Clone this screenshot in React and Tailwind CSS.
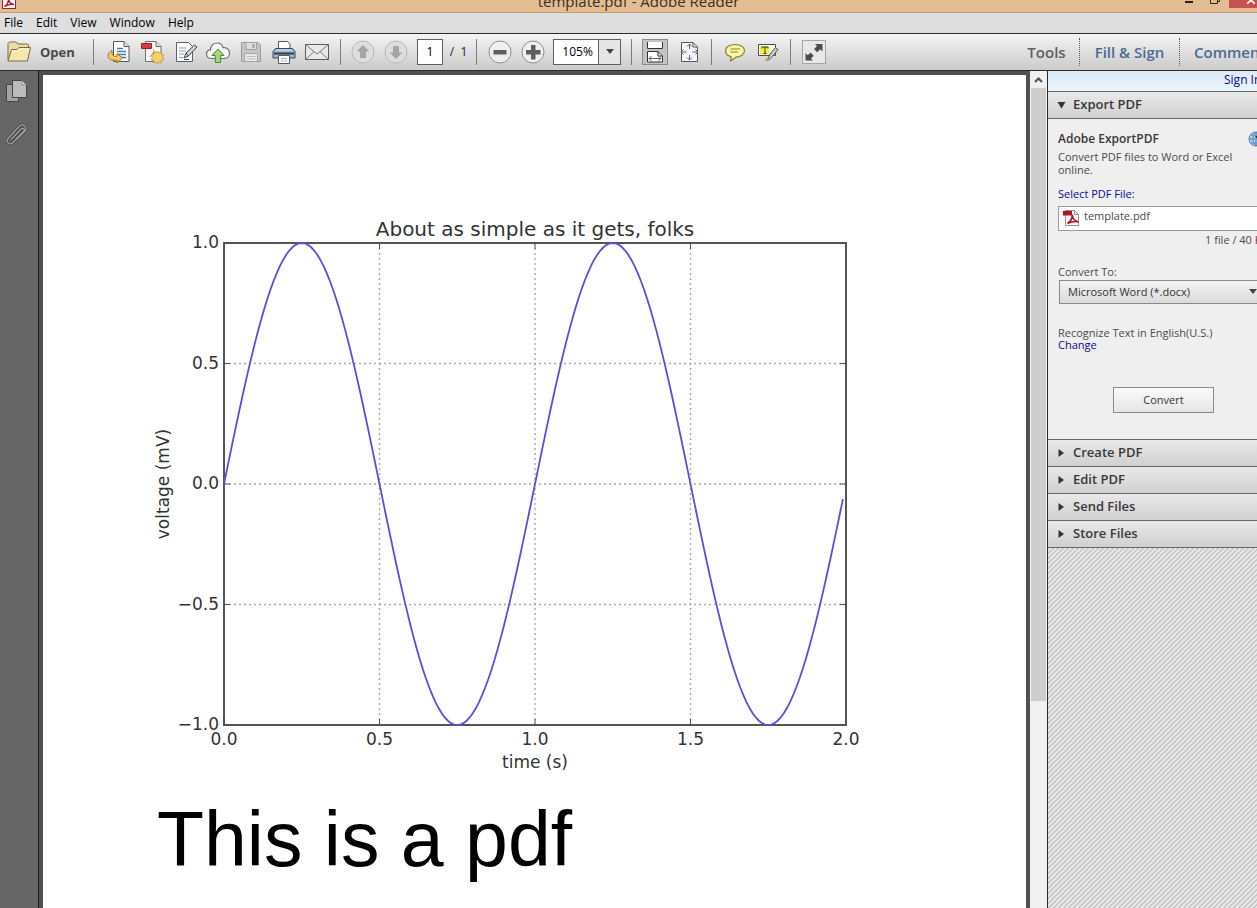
import React, { useState } from "react";

const menuItems = ["File", "Edit", "View", "Window", "Help"];
const closedSections = ["Create PDF", "Edit PDF", "Send Files", "Store Files"];

function Icon({ size = 26, children }) {
  return (
    <svg width={size} height={size} viewBox={`0 0 ${size} ${size}`} fill="none" strokeLinejoin="round" aria-hidden="true">
      {children}
    </svg>
  );
}

function ToolButton({ label, children }) {
  return (
    <button type="button" aria-label={label} className="flex h-[33px] w-[33px] shrink-0 items-center justify-center">
      {children}
    </button>
  );
}

function Separator({ className = "" }) {
  return <div className={`h-[26px] w-px shrink-0 bg-[#7c7c7c] ${className}`} />;
}

function FolderIcon() {
  return (
    <Icon>
      <path d="M2 21V4.500L3.500 3H10l2 2h9.500l1 1v4" fill="#e9dca6" stroke="#7a6a3a" />
      <path d="M2 22L5.500 10.500H11l2-2h11.500L21.500 22z" fill="#f4e6b0" stroke="#7a6a3a" />
      <path d="M6.500 12H12l2-2h9" stroke="#fdf7da" />
    </Icon>
  );
}

function ConvertPageIcon() {
  return (
    <Icon>
      <path d="M7.500 2.500H18l5 5v15H7.500z" fill="#fff" stroke="#55595f" />
      <path d="M18 2.500v5h5" fill="#dfe3e8" stroke="#55595f" />
      <path d="M11 9.500h6M11 12.500h9M11 15.500h9M14 18.500h6" stroke="#3f7bbd" strokeWidth="1.500" />
      <path d="M6 11.500C1.500 13 .8 19 4.500 20.500c2 1 4.500.8 6.500.5v3l5.500-5-5.500-4.500v2.700c-3 .6-5.500-.2-5-5.700z" fill="#f7cb66" stroke="#a87416" />
    </Icon>
  );
}

function CreatePdfIcon() {
  return (
    <Icon>
      <path d="M6.500 2.500H17l5 5v15H6.500z" fill="#f7f7f7" stroke="#6a6d72" />
      <path d="M17 2.500v5h5" fill="#e2e2e2" stroke="#6a6d72" />
      <path d="M10 18c4-2 5-6 4.500-8 0 3 2 5 5 5" stroke="#d9a3a3" />
      <rect x="2.500" y="4.500" width="10" height="5" fill="#d8383f" stroke="#a51d26" />
      <path d="M18.500 12l1.500 2 2.300-1 .2 2.500 2.300.7-1.300 2.300 1.300 2.200-2.400.7-.2 2.400-2.300-.8-1.500 1.800-1.500-1.800-2.300.8-.2-2.400-2.300-.7 1.300-2.200-1.300-2.300 2.300-.7.2-2.500 2.300 1z" fill="#f8d070" stroke="#b98a30" strokeWidth=".8" />
    </Icon>
  );
}

function SignIcon() {
  return (
    <Icon>
      <path d="M4.500 3.500h12l4 4v15h-16z" fill="#fafafa" stroke="#5c6066" />
      <path d="M7 9h7M7 12h7M7 15h5M7 18.500h4" stroke="#9a9a9a" />
      <path d="M12 19l2-5 8.500-8 2.500 2-8.500 9z" fill="#c9d3dc" stroke="#39434d" />
      <path d="M14 14l2.500 3M12 20.500h5" stroke="#39434d" />
    </Icon>
  );
}

function CloudIcon() {
  return (
    <Icon>
      <path d="M6.500 19.500C3 19.500 1.500 17 1.500 15s1.500-4 4-4.200C5.500 6 9 4 12 4c3.200 0 5.500 2 6 4.700 4.500-.4 6.500 2.300 6.500 5.300s-2 5.500-5 5.500z" fill="#f6f6f6" stroke="#6a6f74" strokeWidth="1.200" />
      <path d="M13 10l6 6.500h-3.300v7h-5.400v-7H7z" fill="#a3d873" stroke="#4d8a2e" />
    </Icon>
  );
}

function SaveIcon() {
  return (
    <Icon>
      <path d="M3.500 3.500h16.500l2.500 2.500v16.500h-19z" fill="#c6c6c6" stroke="#9b9b9b" />
      <path d="M8 3.500h10.500v7H8z" fill="#dedede" stroke="#a3a3a3" />
      <path d="M14.500 5h2v4h-2z" fill="#9c9c9c" />
      <path d="M6.500 14.500h13v8h-13z" fill="#eaeaea" stroke="#a3a3a3" />
      <path d="M8.500 17.500h9M8.500 20h9" stroke="#bdbdbd" />
    </Icon>
  );
}

function PrintIcon() {
  return (
    <Icon>
      <path d="M7.500 10V2.500h9L19 5v5z" fill="#fff" stroke="#4d5966" />
      <path d="M4.500 9.500h17l2.500 3v6.500h-22v-6.500z" fill="#9fb6cb" stroke="#34495e" />
      <path d="M3 14.500h20" stroke="#2d3e50" strokeWidth="2" />
      <path d="M5 11h16" stroke="#dbe6f0" />
      <path d="M7.500 16.500h11v8h-11z" fill="#fff" stroke="#4d5966" />
      <path d="M10 19.500h6M10 22h6" stroke="#b5b5b5" />
    </Icon>
  );
}

function MailIcon() {
  return (
    <Icon>
      <rect x="1.500" y="5.500" width="23" height="15" fill="#e9e9e9" stroke="#5d5d5d" />
      <path d="M2 6l11 9L24 6M2 20l8-7.500M24 20l-8-7.500" stroke="#7a7a7a" />
    </Icon>
  );
}

function RoundIcon({ faded, children }) {
  return (
    <Icon>
      <circle cx="13" cy="13" r="11" fill={faded ? "#dedede" : "#efefef"} stroke={faded ? "#b9b9b9" : "#909090"} />
      <g fill={faded ? "#a5a5a5" : "#5f5f5f"}>{children}</g>
    </Icon>
  );
}

function ScrollModeIcon() {
  return (
    <Icon size={24}>
      <path d="M4.500 2v6.500h15V2" fill="#fff" stroke="#333" />
      <path d="M4.500 22V11.500H15l4.500 4.500v6z" fill="#fff" stroke="#333" />
      <path d="M15 11.500v4.500h4.500" stroke="#333" />
      <path d="M6 18.500h12M8.500 16L6 18.500 8.500 21M15.500 16l2.500 2.500-2.500 2.500" stroke="#5a5a8c" />
    </Icon>
  );
}

function FitPageIcon() {
  return (
    <Icon>
      <path d="M5.500 3.500h11.500l4.500 4.500v14.500h-16z" fill="#f6f6f6" stroke="#555" />
      <path d="M17 3.500v4.500h4.500" stroke="#555" />
      <path d="M13.500 5v5M13.500 16v5M5 13h5.500M16.500 13H22M11 7.500l2.500-2.500 2.500 2.500M11 18.500l2.500 2.500 2.500-2.500M7.500 10.500L5 13l2.500 2.500M19.500 10.500L22 13l-2.500 2.500" stroke="#5f5f93" />
    </Icon>
  );
}

function CommentIcon() {
  return (
    <Icon>
      <path d="M13 5.500c5.500 0 9.500 2.700 9.500 6.300s-4 6.400-8.500 6.400L8.500 22l.8-4.200C6 17 3.500 14.800 3.500 11.800c0-3.600 4-6.300 9.500-6.300z" fill="#fbf6a0" stroke="#85803a" strokeWidth="1.200" />
      <path d="M8.500 10h9.500M8.500 13h7.500" stroke="#85803a" />
    </Icon>
  );
}

function HighlightIcon() {
  return (
    <Icon>
      <rect x="3.500" y="5.500" width="17" height="11" fill="#fff" stroke="#4a4a4a" />
      <path d="M5 7h9.500v8.500H5z" fill="#f7f03a" />
      <path d="M7 9.500V8h6v1.500M10 8v6.500M8.500 14.500h3" stroke="#333" />
      <path d="M13 20l2-5 5.500-6.500 2.500 2-5.500 7-3 3z" fill="#c9c9c9" stroke="#555" />
      <path d="M11 21.500l3.500-.7-2-2z" fill="#e8e23a" stroke="#777" strokeWidth=".8" />
    </Icon>
  );
}

function AcrobatIcon() {
  return (
    <svg width="18" height="18" viewBox="0 0 18 18" fill="none" aria-hidden="true">
      <path d="M3.500 1.500h9l4 4v11h-13z" fill="#fff" stroke="#9c8c8c" />
      <path d="M12.500 1.500v4h4" stroke="#9c8c8c" />
      <path d="M1 2h9v4.500H1z" fill="#b3121d" />
      <path d="M5.500 14.500c3-2 5-5.500 4.700-9 .3 4.500 2.300 6.500 6.300 7.500-4-1-8 0-11 1.500z" stroke="#b3121d" strokeWidth="1.600" />
    </svg>
  );
}

function TitleBar() {
  return (
    <header className="flex h-[13px] shrink-0 items-end justify-between overflow-hidden border-b border-[#bf9c79] bg-[#e3bc91]">
      <div className="flex w-24 shrink-0 pl-[2px]">
        <svg width="14" height="14" viewBox="0 0 14 14" fill="none" className="mb-[3px]" aria-hidden="true">
          <rect x=".5" y=".5" width="13" height="13" fill="#fff" stroke="#a51d26" />
          <path d="M2.500 11.500c2-1 4-4 4-8 .2 3.500 2 5.500 5.500 6-3.500-.5-6.500.3-9.500 2z" stroke="#b3121d" strokeWidth="1.400" />
        </svg>
      </div>
      <h1 className="pb-px text-[15px] leading-5 text-[#3c2f22]">template.pdf - Adobe Reader</h1>
      <div className="flex w-[76px] shrink-0 items-end self-stretch">
        <button type="button" aria-label="Minimize" className="mb-[9px] ml-1 h-[2px] w-2 bg-[#2e2418]" />
        <button type="button" aria-label="Restore" className="mb-2 ml-[17px] shrink-0">
          <svg width="10" height="12" viewBox="0 0 10 12" fill="none" stroke="#2e2418" aria-hidden="true">
            <path d="M.5 3.500h7v8h-7zM2.500 3V.5h7v9H8" />
          </svg>
        </button>
        <button type="button" aria-label="Close" className="mb-1 ml-auto flex h-5 w-7 items-end justify-center bg-[#c75050] pb-1 pl-4">
          <svg width="8" height="8" viewBox="0 0 8 8" stroke="#fff" strokeWidth="1.600" aria-hidden="true">
            <path d="M0 0l8 8M8 0L0 8" />
          </svg>
        </button>
      </div>
    </header>
  );
}

function MenuBar() {
  return (
    <nav className="flex h-5 shrink-0 items-center gap-[13px] bg-[#dedede] pl-1 text-xs leading-4 text-black">
      {menuItems.map((item) => (
        <button key={item} type="button">
          {item}
        </button>
      ))}
    </nav>
  );
}

function Toolbar() {
  const [page, setPage] = useState("1");

  return (
    <div className="flex h-[38px] shrink-0 items-center border-y border-[#2b2b2b] bg-linear-to-b from-[#f4f4f4] to-[#cbcbcb] pb-px">
      <button type="button" className="flex shrink-0 items-center gap-2 pl-[6px] text-[13px] leading-5 font-bold text-[#4a4a4a]">
        <FolderIcon />
        Open
      </button>
      <Separator className="mr-[9px] ml-[18px]" />
      <ToolButton label="Convert file"><ConvertPageIcon /></ToolButton>
      <ToolButton label="Create PDF"><CreatePdfIcon /></ToolButton>
      <ToolButton label="Sign"><SignIcon /></ToolButton>
      <ToolButton label="Upload"><CloudIcon /></ToolButton>
      <ToolButton label="Save"><SaveIcon /></ToolButton>
      <ToolButton label="Print"><PrintIcon /></ToolButton>
      <ToolButton label="Email"><MailIcon /></ToolButton>
      <Separator className="mx-[6px]" />
      <ToolButton label="Previous page">
        <RoundIcon faded><path d="M13 6l6.500 6.500H16V19h-6v-6.500H6.500z" /></RoundIcon>
      </ToolButton>
      <ToolButton label="Next page">
        <RoundIcon faded><path d="M13 20l6.500-6.500H16V7h-6v6.500H6.500z" /></RoundIcon>
      </ToolButton>
      <input
        aria-label="Page number"
        value={page}
        onChange={(e) => setPage(e.target.value)}
        className="ml-1 h-[26px] w-[26px] shrink-0 border border-[#5e5e5e] bg-white text-center text-xs text-black"
      />
      <span className="ml-[7px] shrink-0 text-xs whitespace-pre text-[#222]">/  1</span>
      <Separator className="mr-[6px] ml-[9px]" />
      <ToolButton label="Zoom out">
        <RoundIcon><path d="M6.500 11h13v4.500h-13z" /></RoundIcon>
      </ToolButton>
      <ToolButton label="Zoom in">
        <RoundIcon><path d="M11 6h4.500v5h5v4.500h-5v5H11v-5H6v-4.500h5z" /></RoundIcon>
      </ToolButton>
      <div className="relative ml-1 h-[26px] w-[68px] shrink-0 border border-[#5e5e5e] bg-white">
        <select aria-label="Zoom level" defaultValue="105%" className="block h-full w-full appearance-none pl-2 text-xs text-black">
          <option>75%</option>
          <option>100%</option>
          <option>105%</option>
        </select>
        <div className="pointer-events-none absolute inset-y-0 right-0 flex w-[22px] items-center justify-center border-l border-[#5e5e5e] bg-[#e6e6e6]">
          <svg width="8" height="5" viewBox="0 0 8 5" aria-hidden="true"><path d="M0 0h8L4 5z" fill="#444" /></svg>
        </div>
      </div>
      <Separator className="mx-[10px]" />
      <button type="button" aria-label="Scrolling mode" className="flex h-[26px] w-[26px] shrink-0 items-center justify-center border border-[#8a8a8a] bg-[#c4c4c4]">
        <ScrollModeIcon />
      </button>
      <div className="ml-1 flex">
        <ToolButton label="Fit page"><FitPageIcon /></ToolButton>
      </div>
      <Separator className="mx-[6px]" />
      <ToolButton label="Add note"><CommentIcon /></ToolButton>
      <ToolButton label="Highlight text"><HighlightIcon /></ToolButton>
      <Separator className="mr-[11px] ml-[6px]" />
      <button type="button" aria-label="Read mode" className="flex h-6 w-6 shrink-0 items-center justify-center border border-[#a6a6a6] bg-[#e9e9e9]">
        <svg width="22" height="22" viewBox="0 0 22 22" fill="#4c4c4c" aria-hidden="true">
          <path d="M12 3h7.500v7.500l-2.300-2.300-3 3-3.200-3.200 3-3z" />
          <path d="M10 19.500H2.500V12l2.300 2.300 2.700-2.800 3.200 3.200-2.700 2.800z" />
        </svg>
      </button>
      <nav className="ml-auto flex w-[239px] shrink-0 items-center overflow-hidden text-[15px] leading-7 font-semibold whitespace-nowrap text-[#4d6a92]">
        <button type="button" className="w-[61px] shrink-0 pr-1 text-[#606060]">Tools</button>
        <button type="button" className="w-[101px] shrink-0 border-x border-dotted border-[#555]">Fill &amp; Sign</button>
        <button type="button" className="shrink-0 pl-[14px]">Comment</button>
      </nav>
    </div>
  );
}

function SideRail() {
  return (
    <aside className="flex w-[39px] shrink-0 flex-col items-start gap-[18px] border-r border-[#1e1e1e] bg-[#666] pt-[7px] pl-1">
      <button type="button" aria-label="Page thumbnails">
        <svg width="26" height="26" viewBox="0 0 26 26" strokeLinejoin="round" aria-hidden="true">
          <path d="M2.500 6.500h12v17h-12z" fill="#a3a3a3" stroke="#454545" />
          <path d="M8.500 2.500h10l4 4v13h-14z" fill="#bcbcbc" stroke="#454545" />
          <path d="M18 2.500v4.500h4.500" fill="#d5d5d5" stroke="#8a8a8a" />
        </svg>
      </button>
      <button type="button" aria-label="Attachments">
        <svg width="26" height="26" viewBox="0 0 26 26" fill="none" strokeLinecap="round" aria-hidden="true">
          <path d="M7 17.500L17 7c2-2 4.500.5 2.500 2.500L9 20.500c-3.500 3.500-8-.5-4.500-4.500L15 4.500c4-4 9 1 5.500 5L13 17" stroke="#3f3f3f" strokeWidth="2.600" />
          <path d="M7 17.500L17 7c2-2 4.500.5 2.500 2.500L9 20.500c-3.500 3.500-8-.5-4.500-4.500L15 4.500c4-4 9 1 5.500 5L13 17" stroke="#a6a6a6" strokeWidth="1.200" />
        </svg>
      </button>
    </aside>
  );
}

// plot area inside the svg
const plot = { left: 81, top: 28, width: 622, height: 482 };
const xTicks = [0, 0.5, 1, 1.5, 2];
const yTicks = [1, 0.5, 0, -0.5, -1];
const toX = (t) => plot.left + (t / 2) * plot.width;
const toY = (v) => plot.top + ((1 - v) / 2) * plot.height;
const sinePoints = Array.from({ length: 200 }, (_, i) => {
  const t = i / 100;
  return `${toX(t).toFixed(2)},${toY(Math.sin(2 * Math.PI * t)).toFixed(2)}`;
}).join(" ");

function SineChart() {
  const right = plot.left + plot.width;
  const bottom = plot.top + plot.height;

  return (
    <svg
      width="730"
      height="570"
      viewBox="0 0 730 570"
      role="img"
      aria-label="Sine wave chart"
      className="block h-auto max-w-full font-['DejaVu_Sans',sans-serif] text-[17px]"
      fill="#333"
    >
      <text x="392" y="21" textAnchor="middle" className="text-[20px]">About as simple as it gets, folks</text>
      {xTicks.map((t) => (
        <g key={t}>
          {t > 0 && t < 2 && <path d={`M${toX(t)} ${plot.top}V${bottom}`} stroke="#a8a8a8" strokeWidth="1.400" strokeDasharray="2 3" />}
          <path d={`M${toX(t)} ${plot.top}v6M${toX(t)} ${bottom}v-6`} stroke="#555" />
          <text x={toX(t)} y="530" textAnchor="middle">{t.toFixed(1)}</text>
        </g>
      ))}
      {yTicks.map((v) => (
        <g key={v}>
          {Math.abs(v) < 1 && <path d={`M${plot.left} ${toY(v)}H${right}`} stroke="#a8a8a8" strokeWidth="1.400" strokeDasharray="2 3" />}
          <path d={`M${plot.left} ${toY(v)}h6M${right} ${toY(v)}h-6`} stroke="#555" />
          <text x="76" y={toY(v) + 5} textAnchor="end">{v.toFixed(1).replace("-", "−")}</text>
        </g>
      ))}
      <rect x={plot.left} y={plot.top} width={plot.width} height={plot.height} fill="none" stroke="#555" strokeWidth="2" />
      <polyline points={sinePoints} fill="none" stroke="#564fe2" strokeWidth="1.800" />
      <text x="392" y="553" textAnchor="middle">time (s)</text>
      <text transform="translate(26 269) rotate(-90)" textAnchor="middle">voltage (mV)</text>
    </svg>
  );
}

function DocumentView() {
  return (
    <main className="min-w-0 flex-1 overflow-hidden border-x-4 border-t-4 border-[#505050] bg-white">
      <div className="pt-[140px] pl-[100px]">
        <SineChart />
        <p className="mt-[10px] ml-[14px] font-['Liberation_Sans',Arial,sans-serif] text-[77px] leading-[88px] whitespace-nowrap text-black">
          This is a pdf
        </p>
      </div>
    </main>
  );
}

function ScrollBar() {
  return (
    <div className="flex w-[18px] shrink-0 flex-col border-r border-[#2b2b2b] bg-[#f0f0f0]">
      <button type="button" aria-label="Scroll up" className="flex h-[17px] shrink-0 items-center justify-center">
        <svg width="9" height="6" viewBox="0 0 9 6" fill="none" stroke="#505050" strokeWidth="2" aria-hidden="true">
          <path d="M1 5l3.500-3.500L8 5" />
        </svg>
      </button>
      <div className="mr-px ml-px h-[75%] max-h-[613px] bg-[#cdcdcd]" />
    </div>
  );
}

function SectionHeader({ title, open }) {
  return (
    <button
      type="button"
      className="flex h-[27px] w-full shrink-0 items-center gap-[7px] border-t border-[#666] bg-linear-to-b from-[#e9e9e9] to-[#d0d0d0] pb-[2px] pl-[9px] text-left text-[13px] leading-5 font-semibold text-[#383838]"
    >
      <svg width="9" height="8" viewBox="0 0 9 8" fill="#333" className="mt-px" aria-hidden="true">
        {open ? <path d="M.5 1h8L4.500 7.500z" /> : <path d="M1.500 0v8L7 4z" />}
      </svg>
      {title}
    </button>
  );
}

function ToolsPane() {
  return (
    <aside className="flex w-[209px] shrink-0 flex-col overflow-hidden bg-[linear-gradient(135deg,#e6e6e6_0_12%,#c6c6c6_12%_38%,#e6e6e6_38%_62%,#c6c6c6_62%_88%,#e6e6e6_88%)] bg-size-[5px_5px] text-[11px] text-[#4a4a4a]">
      <div className="w-[250px] shrink-0 bg-[#efefef]">
        <div className="h-5 bg-linear-to-b from-[#dcebf7] to-[#eaf5fd] pl-[176px] text-xs leading-[18px]">
          <a href="#signin" className="text-[#0b0b94]">Sign In</a>
        </div>
        <SectionHeader title="Export PDF" open />
        <div className="flex h-[321px] flex-col border-t border-[#666] pl-[10px]">
          <div className="mt-3 flex items-center">
            <h2 className="w-[190px] text-xs leading-4 font-semibold text-[#383838]">Adobe ExportPDF</h2>
            <svg width="16" height="16" viewBox="0 0 16 16" fill="none" aria-hidden="true">
              <circle cx="8" cy="8" r="7" fill="#a9cdec" stroke="#4a7eb0" />
              <path d="M1 8h14M8 1v14M3 4h10M3 12h10M8 1C4 5 4 11 8 15M8 1c4 4 4 10 0 14" stroke="#4a7eb0" strokeWidth=".8" />
              <path d="M7 5h9v11z" fill="#2a2a2a" />
            </svg>
          </div>
          <p className="mt-[3px] w-[190px] leading-[13px]">Convert PDF files to Word or Excel online.</p>
          <a href="#select" className="mt-[10px] leading-4 text-[#0b0b94]">Select PDF File:</a>
          <div className="mt-1 flex h-[25px] items-start gap-1 border border-[#999] bg-white pt-[2px] pl-[3px] leading-[14px]">
            <AcrobatIcon />
            template.pdf
          </div>
          <p className="mt-px pl-[147px] leading-4">
            1 file / 40 <span className="text-[#a51d26]">KB</span>
          </p>
          <label htmlFor="format" className="mt-4 leading-4">Convert To:</label>
          <div className="relative ml-px">
            <select id="format" defaultValue="docx" className="block h-6 w-full appearance-none border border-[#8a8a8a] bg-linear-to-b from-[#f4f4f4] to-[#dadada] pl-2 text-[11px] text-[#333]">
              <option value="docx">Microsoft Word (*.docx)</option>
              <option value="xlsx">Microsoft Excel (*.xlsx)</option>
            </select>
            <svg width="8" height="5" viewBox="0 0 8 5" className="pointer-events-none absolute top-[9px] left-[190px]" aria-hidden="true">
              <path d="M0 0h8L4 5z" fill="#444" />
            </svg>
          </div>
          <p className="mt-[23px] leading-3">Recognize Text in English(U.S.)</p>
          <a href="#change" className="leading-3 text-[#0b0b94]">Change</a>
          <button type="button" className="mt-[36px] ml-[55px] h-[26px] w-[101px] border border-[#8a8a8a] bg-linear-to-b from-[#fafafa] to-[#e6e6e6] text-[#333]">
            Convert
          </button>
        </div>
        {closedSections.map((title) => (
          <SectionHeader key={title} title={title} />
        ))}
        <div className="h-px bg-[#666]" />
      </div>
    </aside>
  );
}

function App() {
  return (
    <div className="flex h-screen flex-col overflow-hidden bg-[#505050] font-['Open_Sans','Noto_Sans',sans-serif]">
      <TitleBar />
      <MenuBar />
      <Toolbar />
      <div className="flex min-h-0 flex-1">
        <SideRail />
        <DocumentView />
        <ScrollBar />
        <ToolsPane />
      </div>
    </div>
  );
}

export default App;
